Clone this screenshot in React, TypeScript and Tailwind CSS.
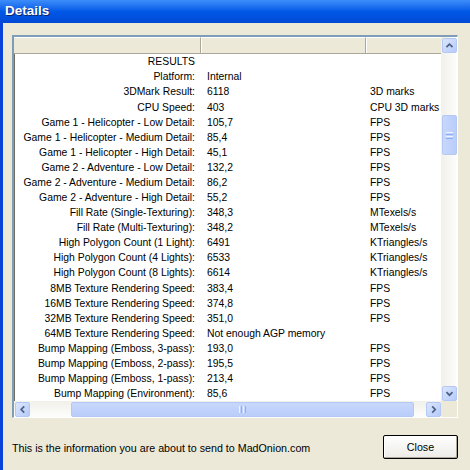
import React from "react";

const rows: [string, string, string][] = [
  ["RESULTS", "", ""],
  ["Platform:", "Internal", ""],
  ["3DMark Result:", "6118", "3D marks"],
  ["CPU Speed:", "403", "CPU 3D marks"],
  ["Game 1 - Helicopter - Low Detail:", "105,7", "FPS"],
  ["Game 1 - Helicopter - Medium Detail:", "85,4", "FPS"],
  ["Game 1 - Helicopter - High Detail:", "45,1", "FPS"],
  ["Game 2 - Adventure - Low Detail:", "132,2", "FPS"],
  ["Game 2 - Adventure - Medium Detail:", "86,2", "FPS"],
  ["Game 2 - Adventure - High Detail:", "55,2", "FPS"],
  ["Fill Rate (Single-Texturing):", "348,3", "MTexels/s"],
  ["Fill Rate (Multi-Texturing):", "348,2", "MTexels/s"],
  ["High Polygon Count (1 Light):", "6491", "KTriangles/s"],
  ["High Polygon Count (4 Lights):", "6533", "KTriangles/s"],
  ["High Polygon Count (8 Lights):", "6614", "KTriangles/s"],
  ["8MB Texture Rendering Speed:", "383,4", "FPS"],
  ["16MB Texture Rendering Speed:", "374,8", "FPS"],
  ["32MB Texture Rendering Speed:", "351,0", "FPS"],
  ["64MB Texture Rendering Speed:", "Not enough AGP memory", ""],
  ["Bump Mapping (Emboss, 3-pass):", "193,0", "FPS"],
  ["Bump Mapping (Emboss, 2-pass):", "195,5", "FPS"],
  ["Bump Mapping (Emboss, 1-pass):", "213,4", "FPS"],
  ["Bump Mapping (Environment):", "85,6", "FPS"],
];

function Arrow({ dir }: { dir: "up" | "down" | "left" | "right" }) {
  const paths: Record<string, string> = {
    up: "M4 9.5 L7.5 6 L11 9.5",
    down: "M4 6 L7.5 9.5 L11 6",
    left: "M9.5 4 L6 7.5 L9.5 11",
    right: "M6 4 L9.5 7.5 L6 11",
  };
  return (
    <div className="w-[15px] h-[15px] rounded-[2px] border border-[#B4C8F6] bg-gradient-to-br from-[#DCE6FD] to-[#B6CBFA] flex items-center justify-center">
      <svg width="15" height="15" viewBox="0 0 15 15">
        <path d={paths[dir]} fill="none" stroke="#4D6185" strokeWidth="2" />
      </svg>
    </div>
  );
}

export default function App() {
  return (
    <div
      className="w-[470px] h-[470px] bg-[#ECE9D8] overflow-hidden flex flex-col"
      style={{ fontFamily: '"Liberation Sans", Arial, sans-serif' }}
    >
      <div className="h-[23px] shrink-0 bg-gradient-to-b from-[#3D8DFB] via-[#0058E6] to-[#0049D6] flex items-center pl-[5px]">
        <span className="text-white font-bold text-[13.5px] [text-shadow:1px_1px_0_#0A246A]">Details</span>
      </div>
      <div className="flex-1 border-l-[3px] border-[#0842D8] flex flex-col pl-[9px] pt-[12px]">
        <div className="w-[446px] h-[383px] border-t-2 border-l-2 border-t-[#7F9DB9] border-l-[#7F9DB9] border-b border-r border-b-white border-r-white shadow-[inset_1px_1px_0_#716F64] bg-white grid grid-cols-[1fr_16px] grid-rows-[1fr_16px] overflow-hidden">
          <div className="overflow-hidden text-[10.4px] text-black">
            <div className="flex h-[17px] bg-[#ECE9D8] border-b border-[#ACA899] w-[600px]">
              <div className="w-[187px] border-r border-r-[#ACA899] shadow-[1px_0_0_white] border-t border-t-white"></div>
              <div className="w-[164px] border-r border-r-[#ACA899] shadow-[1px_0_0_white] border-t border-t-white ml-px"></div>
              <div className="flex-1 border-t border-t-white ml-px"></div>
            </div>
            <div className="pt-[1px]">
              {rows.map((r, i) => (
                <div key={i} className="flex h-[15.08px] items-center leading-none w-[600px]">
                  <div className="w-[187px] text-right pr-[6px] whitespace-nowrap">{r[0]}</div>
                  <div className="w-[164px] pl-[6px] whitespace-nowrap">{r[1]}</div>
                  <div className="pl-[5px] whitespace-nowrap">{r[2]}</div>
                </div>
              ))}
            </div>
          </div>
          <div className="bg-gradient-to-r from-[#F1F0EA] to-[#FDFDFC] flex flex-col items-center pt-px">
            <Arrow dir="up" />
            <div className="flex-1 w-full flex flex-col items-center">
              <div className="h-[62px]"></div>
              <div className="w-[15px] h-[40px] rounded-[2px] border border-[#B4C8F6] bg-gradient-to-r from-[#C8D7FB] to-[#B9CDFA] flex flex-col items-center justify-center gap-[1px]">
                <div className="w-[7px] h-px bg-[#EEF3FE]"></div>
                <div className="w-[7px] h-px bg-[#8CB0F8]"></div>
                <div className="w-[7px] h-px bg-[#EEF3FE]"></div>
                <div className="w-[7px] h-px bg-[#8CB0F8]"></div>
              </div>
            </div>
            <Arrow dir="down" />
          </div>
          <div className="bg-gradient-to-b from-[#F1F0EA] to-[#FDFDFC] flex items-center pl-px">
            <Arrow dir="left" />
            <div className="w-[41px]"></div>
            <div className="w-[343px] h-[15px] rounded-[2px] border border-[#B4C8F6] bg-gradient-to-b from-[#C8D7FB] to-[#B9CDFA] flex items-center justify-center gap-[1px]">
              <div className="h-[7px] w-px bg-[#EEF3FE]"></div>
              <div className="h-[7px] w-px bg-[#8CB0F8]"></div>
              <div className="h-[7px] w-px bg-[#EEF3FE]"></div>
              <div className="h-[7px] w-px bg-[#8CB0F8]"></div>
            </div>
            <div className="flex-1"></div>
            <Arrow dir="right" />
          </div>
          <div className="bg-[#ECE9D8]"></div>
        </div>
        <div className="flex items-center mt-[17px] pr-[12px]">
          <span className="flex-1 text-[10.7px] text-black pt-[2px]">This is the information you are about to send to MadOnion.com</span>
          <button className="w-[75px] h-[24px] border border-black rounded-[2px] bg-gradient-to-b from-[#FFFFFF] to-[#ECEBE6] text-[10.7px] text-black shadow-[inset_-1px_-1px_0_#ACA899,inset_1px_1px_0_white]">
            Close
          </button>
        </div>
      </div>
    </div>
  );
}
